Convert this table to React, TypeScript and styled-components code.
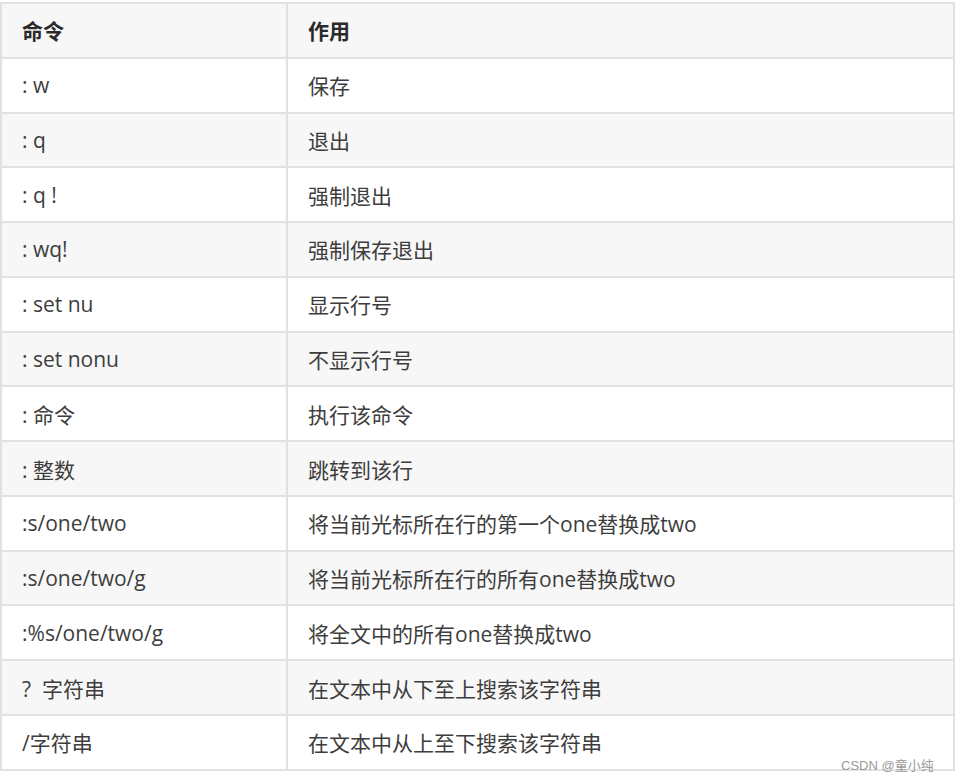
import React from "react";
import styled, { createGlobalStyle } from "styled-components";

const GlobalStyle = createGlobalStyle`
  html, body {
    margin: 0;
    padding: 0;
    background: #ffffff;
  }
`;

const Page = styled.div`
  position: relative;
  width: 956px;
  height: 780px;
  padding: 2px 0 0 0;
  box-sizing: border-box;
`;

const Table = styled.table`
  width: 955px;
  border-collapse: collapse;
  table-layout: fixed;
  font-family: "Open Sans", "Noto Sans CJK SC", sans-serif;
  font-size: 21px;
  color: #3d3d3d;
`;

const Row = styled.tr<{ $shaded?: boolean }>`
  height: 54.77px;
  background: ${({ $shaded }) => ($shaded ? "#f7f7f7" : "#ffffff")};
`;

const HeadCell = styled.th`
  border: 2px solid #dfe2e5;
  padding: 0 20px;
  text-align: left;
  font-weight: 700;
  color: #2a2a2a;
`;

const Cell = styled.td`
  border: 2px solid #dfe2e5;
  padding: 0 20px;
  white-space: pre;
  vertical-align: middle;
`;

const Watermark = styled.span`
  position: absolute;
  left: 841px;
  top: 755px;
  font-family: "Liberation Sans", "Noto Sans CJK SC", sans-serif;
  font-size: 13px;
  color: #9a9a9a;
`;

const rows: [string, string][] = [
  [": w", "保存"],
  [": q", "退出"],
  [": q !", "强制退出"],
  [": wq!", "强制保存退出"],
  [": set nu", "显示行号"],
  [": set nonu", "不显示行号"],
  [": 命令", "执行该命令"],
  [": 整数", "跳转到该行"],
  [":s/one/two", "将当前光标所在行的第一个one替换成two"],
  [":s/one/two/g", "将当前光标所在行的所有one替换成two"],
  [":%s/one/two/g", "将全文中的所有one替换成two"],
  ["?  字符串", "在文本中从下至上搜索该字符串"],
  ["/字符串", "在文本中从上至下搜索该字符串"],
];

export default function App() {
  return (
    <Page>
      <GlobalStyle />
      <Table>
        <colgroup>
          <col style={{ width: "286px" }} />
          <col />
        </colgroup>
        <thead>
          <Row $shaded>
            <HeadCell>命令</HeadCell>
            <HeadCell>作用</HeadCell>
          </Row>
        </thead>
        <tbody>
          {rows.map(([cmd, desc], i) => (
            <Row key={cmd} $shaded={i % 2 === 1}>
              <Cell>{cmd}</Cell>
              <Cell>{desc}</Cell>
            </Row>
          ))}
        </tbody>
      </Table>
      <Watermark>CSDN @童小纯</Watermark>
    </Page>
  );
}
